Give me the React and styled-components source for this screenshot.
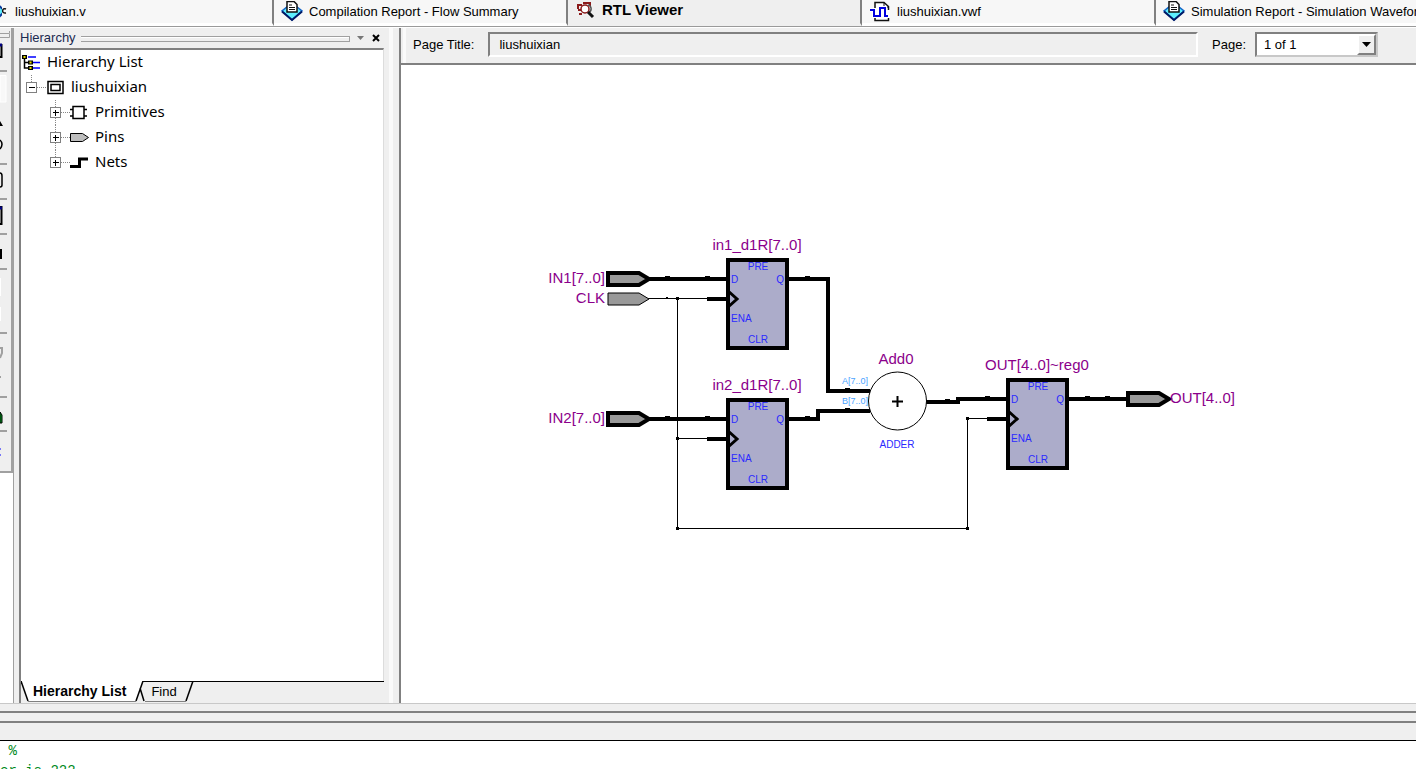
import React from "react";
import styled, { createGlobalStyle } from "styled-components";

const GlobalStyle = createGlobalStyle`
  * {
    box-sizing: border-box;
  }
  body {
    margin: 0;
    background: #efefef;
    color: #000;
    font-family: "Liberation Sans", Arial, sans-serif;
    font-size: 13px;
    overflow: hidden;
  }
  svg {
    display: block;
    flex: none;
  }
`;

const Window = styled.div`
  height: 100vh;
  display: flex;
  flex-direction: column;
  overflow: hidden;
`;

/* document tabs */

const TabBar = styled.nav`
  flex: none;
  display: flex;
  height: 27px;
  overflow: hidden;
  background: #f7f7f7;
  border-bottom: 1px solid #9a9a9a;
`;

const Tab = styled.button`
  flex: none;
  display: flex;
  align-items: center;
  gap: 6px;
  width: 294px;
  padding: ${(p) => (p.$active ? "0 0 4px 8px" : "1px 0 0 7px")};
  border: 0;
  border-right: 2px solid #808080;
  border-bottom: 3px solid ${(p) => (p.$active ? "#efefef" : "#fff")};
  background: ${(p) => (p.$active ? "#efefef" : "#f7f7f7")};
  color: #000;
  font-family: inherit;
  font-size: ${(p) => (p.$active ? 15 : 13)}px;
  font-weight: ${(p) => (p.$active ? 700 : 400)};
  line-height: 20px;
  white-space: nowrap;

  &:first-child {
    margin-left: -20px;
  }
`;

const Main = styled.div`
  flex: 1;
  display: flex;
  min-height: 0;
  border-top: 1px solid #fff;
`;

/* left tool strip, mostly cut by the window edge */

const ToolColumn = styled.aside`
  flex: none;
  width: 14px;
  background: #fff;
  border-right: 1px solid #a0a0a0;
`;

const ToolStrip = styled.div`
  height: 445px;
  overflow: hidden;
  background: #efefef;
  border-right: 2px solid #a0a0a0;
  border-bottom: 2px solid #a0a0a0;
`;

/* hierarchy panel */

const Panel = styled.section`
  flex: none;
  display: flex;
  flex-direction: column;
  width: 370px;
  padding-left: 5px;
`;

const PanelHead = styled.header`
  display: flex;
  align-items: center;
  height: 20px;
  padding: 0 0 1px 1px;
  color: #1a2a50;
`;

const Grip = styled.div`
  flex: 1;
  height: 6px;
  margin: 2px 2px 0 5px;
  border: 1px solid #a0a0a0;
  border-left: 0;
  box-shadow: inset 0 1px #fff;
`;

const HeadButton = styled.button`
  width: 16px;
  height: 16px;
  padding: 0;
  display: flex;
  align-items: center;
  justify-content: center;
  border: 0;
  background: none;
`;

const PanelBody = styled.div`
  flex: 1;
  background: #fff;
  border-top: 2px solid #808080;
  border-left: 2px solid #808080;
  border-right: 1px solid #dcdcdc;
`;

const Tree = styled.ul`
  margin: 0;
  padding: 0;
  list-style: none;
  font-family: "Noto Sans", sans-serif;
  font-size: 15px;
  line-height: 22px;
`;

const TreeRow = styled.li`
  display: flex;
  align-items: center;
  height: 25px;
  padding-left: ${(p) => p.$indent}px;
`;

const TreeLabel = styled.span`
  padding: 0 0 3px ${(p) => p.$gap || 6}px;
`;

const PanelTabs = styled.div`
  display: flex;
  height: 22px;
  border-left: 2px solid #808080;
`;

const PanelTab = styled.button`
  height: 21px;
  padding: 0 4px 0 1px;
  border: 0;
  border-top: 1px solid ${(p) => (p.$active ? "#fff" : "#000")};
  border-bottom: 1px solid #808080;
  background: ${(p) => (p.$active ? "#fff" : "#efefef")};
  color: #000;
  font-family: inherit;
  font-size: ${(p) => (p.$active ? 14 : 13)}px;
  font-weight: ${(p) => (p.$active ? 700 : 400)};
  line-height: 19px;
`;

const PanelTabsRest = styled.div`
  flex: 1;
  border-top: 1px solid #000;
`;

/* viewer */

const Gutter = styled.div`
  flex: none;
  width: 15px;
  padding-left: 5px;

  &::before {
    content: "";
    display: block;
    width: 10px;
    height: 100%;
    border-left: 4px solid #fafafa;
    border-right: 3px solid #fafafa;
  }
`;

const Viewer = styled.section`
  flex: 1;
  min-width: 0;
  display: flex;
  flex-direction: column;
  border-left: 2px solid #808080;
`;

const PageBar = styled.div`
  flex: none;
  display: flex;
  align-items: center;
  height: 35px;
  padding: 0 38px 2px 12px;
`;

const TitleInput = styled.input`
  flex: 1;
  min-width: 0;
  height: 25px;
  margin: 0 14px;
  padding: 0 9px;
  border: 2px solid;
  border-color: #808080 #fff #fff #808080;
  background: #efefef;
  color: #000;
  font-family: inherit;
  font-size: 13px;
`;

const SelectBox = styled.div`
  position: relative;
  width: 123px;
  height: 25px;
  margin-left: 9px;
`;

const PageSelect = styled.select`
  appearance: none;
  width: 100%;
  height: 100%;
  padding: 0 7px;
  border: 2px solid;
  border-color: #808080 #c8c8c8 #c8c8c8 #808080;
  border-radius: 0;
  background: #fff;
  color: #000;
  font-family: inherit;
  font-size: 13px;
`;

const SelectArrow = styled.span`
  position: absolute;
  top: 2px;
  right: 2px;
  bottom: 2px;
  width: 19px;
  display: flex;
  align-items: center;
  justify-content: center;
  border: 2px solid;
  border-color: #fff #808080 #808080 #fff;
  background: #efefef;
  pointer-events: none;
`;

const Canvas = styled.div`
  flex: 1;
  min-height: 0;
  overflow: hidden;
  background: #fff;
  border-top: 2px solid #808080;
`;

/* message log */

const Splitter = styled.div`
  flex: none;
  height: 16px;
  padding-top: 7px;
  border-top: 1px solid #c8c8c8;

  &::after {
    content: "";
    display: block;
    height: 8px;
    border-top: 2px solid #808080;
    border-bottom: 2px solid #808080;
  }
`;

const Log = styled.section`
  flex: none;
  height: 50px;
  padding-top: 21px;
  overflow: hidden;
`;

const LogText = styled.pre`
  height: 40px;
  margin: 0;
  border-top: 1px solid #000;
  background: #fff;
  color: #008a1c;
  font-family: "Liberation Mono", monospace;
  font-size: 14px;
  line-height: 20px;
`;

function ReportIcon() {
  return (
    <svg width="22" height="22" viewBox="0 0 22 22">
      <path d="M11 2L21 10L11 19L1 10Z" fill="#5df0ff" stroke="#1464c8" strokeWidth="1.5" />
      <path d="M1 10.500L11 19L21 10.500" fill="none" stroke="#001a66" strokeWidth="2" />
      <path d="M6 0.500h7l3 3V11H6z" fill="#fff" stroke="#111" strokeWidth="1.5" />
      <path d="M8 4h3M8 6.500h6M8 8.500h6" stroke="#111" />
    </svg>
  );
}

function VerilogIcon() {
  return (
    <svg width="22" height="22" viewBox="0 0 22 22">
      <path d="M9 2L18 10L9 19L0 10Z" fill="#5df0ff" stroke="#0b3a9c" strokeWidth="2" />
      <path d="M15 6h7v9h-7z" fill="#f7f7f7" />
      <path d="M19 8c-4-2-5 5 0 4" fill="none" stroke="#111" strokeWidth="1.5" />
    </svg>
  );
}

function RtlIcon() {
  return (
    <svg width="20" height="18" viewBox="0 0 20 18">
      <path d="M2 8V4h4M2 9h3M6 13H3M7 2h7v3" fill="none" stroke="#8b1a1a" strokeWidth="2" />
      <circle cx="9" cy="8" r="4" fill="#fff" stroke="#8b1a1a" strokeWidth="1.5" />
      <path d="M12 4c4 1 4 6 1 7" fill="none" stroke="#555" strokeWidth="1.5" />
      <path d="M12 11l5 5" stroke="#111" strokeWidth="3" />
    </svg>
  );
}

function WaveIcon() {
  return (
    <svg width="22" height="22" viewBox="0 0 22 22">
      <path d="M6 1.500h9l4.500 4v14H6z" fill="#fff" stroke="#111" strokeWidth="1.5" />
      <path d="M15 2v4h4" fill="none" stroke="#111" />
      <path d="M1 9h4v6h6V7h5v8h3V9" fill="none" stroke="#fff" strokeWidth="4" />
      <path d="M1 9h4v6h6V7h5v8h3" fill="none" stroke="#0000e0" strokeWidth="2" />
    </svg>
  );
}

function ListIcon() {
  return (
    <svg width="19" height="16" viewBox="0 0 19 16">
      <path d="M2.500 2v11H8M3 7.500h5" fill="none" stroke="#000" strokeWidth="1.5" />
      <path d="M6 2h8M11 7.500h7M11 13h7" stroke="#0000ff" strokeWidth="1.5" />
      <path d="M0 0h5v4H0zM6 5.500h5v4H6zM6 11h5v4H6z" fill="#000" />
      <path d="M1.500 1h2v2h-2zM7.500 6.500h2v2h-2zM7.500 12h2v2h-2z" fill="#e8e000" />
    </svg>
  );
}

/* expander box plus the dotted connector on both sides */
function Expander({ open, last }) {
  return (
    <svg width="20" height="25" viewBox="0 0 20 25" shapeRendering="crispEdges">
      <path d={last ? "M5.500 0V8M11 12.500h9" : "M5.500 0V25M11 12.500h9"} stroke="#888" strokeDasharray="1 1" />
      <rect x="0.500" y="7.500" width="10" height="10" fill="#fff" stroke="#808080" />
      <path d={open ? "M3 12.500h6" : "M3 12.500h6M5.500 10v6"} stroke="#000" />
    </svg>
  );
}

function NodeIcon({ kind }) {
  return (
    <svg width="20" height="16" viewBox="0 0 20 16">
      {kind === "entity" && (
        <g fill="#fff" stroke="#000" strokeWidth="1.5">
          <path d="M2 1.500h15v12H2z" />
          <path d="M5 4.500h9v6H5z" />
        </g>
      )}
      {kind === "primitive" && (
        <g fill="#fff" stroke="#000" strokeWidth="1.5">
          <path d="M0 4.500h17M0 11h17" />
          <path d="M3 1.500h11v12H3z" />
        </g>
      )}
      {kind === "pin" && <path d="M0.500 3.500h12l6 4l-6 4h-12z" fill="#bdbdbd" stroke="#000" />}
      {kind === "net" && <path d="M0 11.500h9.500V4H18" fill="none" stroke="#000" strokeWidth="3" />}
    </svg>
  );
}

const tabs = [
  { label: "liushuixian.v", Icon: VerilogIcon },
  { label: "Compilation Report - Flow Summary", Icon: ReportIcon },
  { label: "RTL Viewer", Icon: RtlIcon, active: true },
  { label: "liushuixian.vwf", Icon: WaveIcon },
  { label: "Simulation Report - Simulation Waveforms", Icon: ReportIcon },
];

const nodes = [
  { label: "Primitives", kind: "primitive" },
  { label: "Pins", kind: "pin" },
  { label: "Nets", kind: "net" },
];

function ToolMarks() {
  return (
    <svg width="12" height="444" viewBox="0 28 12 444" fill="none">
      <path d="M0 33.500h9.500V31M0 37.500h9.500V34" stroke="#a0a0a0" />
      <path d="M0 71h7M0 164h7M0 199h7M0 234h7M0 269h7M0 333h7M0 397h7M0 431h7" stroke="#a0a0a0" strokeWidth="2" />
      <path d="M0 75.500h6V102H0z" fill="#f8f8f8" stroke="#fff" />
      <path d="M0 45h1.500v12H0M0 207h1.500v17H0" stroke="#000" strokeWidth="2" />
      <path d="M0 45h2M0 208h2" stroke="#000080" strokeWidth="3" />
      <path d="M0 121l3 5H0z" fill="#000" />
      <path d="M0 140q4 4 0 9M0 173q2 0 2 3v9q0 2-2 2" stroke="#000" strokeWidth="1.5" />
      <path d="M0 250h1v8H0" stroke="#000" strokeWidth="2" />
      <path d="M0 278h1v18H0zM0 307h1v14H0z" fill="#fff" />
      <path d="M0 348h2v5l-2 5M0 377h1" stroke="#a0a0a0" strokeWidth="2" />
      <path d="M0 412l2 3v8H0z" fill="#00a020" stroke="#000" />
      <path d="M0 449h1M0 455h1" stroke="#0000ff" />
    </svg>
  );
}

/* schematic parts */

const NetLabel = styled.text`
  fill: #8b008b;
  font-size: 15px;
  text-anchor: ${(p) => p.$anchor || "start"};
`;

const PortLabel = styled.text`
  fill: ${(p) => (p.$bus ? "#4aa3ff" : "#2a2aff")};
  font-size: ${(p) => (p.$bus ? 9 : 10)}px;
  text-anchor: ${(p) => p.$anchor || "start"};
`;

function Register({ x, y, name }) {
  return (
    <g transform={`translate(${x} ${y})`}>
      <NetLabel x="30" y="-8" $anchor="middle">{name}</NetLabel>
      <rect x="1" y="2" width="59" height="88" fill="#acacca" stroke="#000" strokeWidth="4" />
      <path d="M-20 41H0" stroke="#000" strokeWidth="4" />
      <path d="M0 32L10 41L0 50" fill="none" stroke="#000" strokeWidth="3" />
      <PortLabel x="31" y="12" $anchor="middle">PRE</PortLabel>
      <PortLabel x="4" y="25">D</PortLabel>
      <PortLabel x="57" y="25" $anchor="end">Q</PortLabel>
      <PortLabel x="4" y="64">ENA</PortLabel>
      <PortLabel x="31" y="85" $anchor="middle">CLR</PortLabel>
    </g>
  );
}

function Pin({ x, y, thin }) {
  return (
    <path
      d={`M${x} ${y - 6}h31l10 6l-10 6H${x}z`}
      fill="#999"
      stroke="#000"
      strokeWidth={thin ? 1 : 4}
    />
  );
}

function Schematic() {
  return (
    <svg width="1015" height="638" viewBox="401 65 1015 638" role="img" aria-label="RTL schematic">
      <g fill="none" stroke="#000" strokeWidth="4">
        <path d="M648 279H728M648 419H728" />
        <path d="M788 279H828V391H870" />
        <path d="M788 419H818V411H870" />
        <path d="M926 402H958V399H1008" />
        <path d="M1068 399H1128" />
      </g>
      <g fill="none" stroke="#000" shapeRendering="crispEdges">
        <path d="M648 298.500H708M677.500 298V528.500H967.500V418.500H990M677.500 438.500H708" />
      </g>
      <path
        d="M665 276h5v3h-5zM705 276h5v3h-5zM805 276h5v3h-5zM665 416h5v3h-5zM705 416h5v3h-5zM805 416h5v3h-5zM845 388h5v3h-5zM845 408h5v3h-5zM945 399h5v3h-5zM985 396h5v3h-5zM1085 396h5v3h-5zM1105 396h5v3h-5zM666 297h2v2h-2zM676 297h3v3h-3zM676 437h3v3h-3zM676 527h3v3h-3zM966 527h3v3h-3zM966 417h3v3h-3z"
        fill="#000"
      />
      <Pin x={608} y={279} />
      <Pin x={608} y={299} thin />
      <Pin x={608} y={419} />
      <Pin x={1128} y={399} />
      <NetLabel x="605" y="283" $anchor="end">IN1[7..0]</NetLabel>
      <NetLabel x="605" y="303" $anchor="end">CLK</NetLabel>
      <NetLabel x="605" y="423" $anchor="end">IN2[7..0]</NetLabel>
      <NetLabel x="1170" y="403">OUT[4..0]</NetLabel>
      <Register x={727} y={258} name="in1_d1R[7..0]" />
      <Register x={727} y={398} name="in2_d1R[7..0]" />
      <Register x={1007} y={378} name="OUT[4..0]~reg0" />
      <circle cx="897.500" cy="401" r="29" fill="#fff" stroke="#000" />
      <path d="M892 401.500h11M897.500 396v11" stroke="#000" strokeWidth="2" />
      <NetLabel x="896" y="364" $anchor="middle">Add0</NetLabel>
      <PortLabel x="897" y="448" $anchor="middle">ADDER</PortLabel>
      <PortLabel x="868" y="384" $anchor="end" $bus>A[7..0]</PortLabel>
      <PortLabel x="868" y="404" $anchor="end" $bus>B[7..0]</PortLabel>
    </svg>
  );
}

function App() {
  return (
    <Window>
      <GlobalStyle />
      <TabBar>
        {tabs.map(({ label, Icon, active }) => (
          <Tab key={label} $active={active}>
            <Icon />
            {label}
          </Tab>
        ))}
      </TabBar>
      <Main>
        <ToolColumn>
          <ToolStrip>
            <ToolMarks />
          </ToolStrip>
        </ToolColumn>
        <Panel>
          <PanelHead>
            Hierarchy
            <Grip />
            <HeadButton aria-label="Menu">
              <svg width="7" height="4" viewBox="0 0 7 4">
                <path d="M0 0h7L3.500 4z" fill="#777" />
              </svg>
            </HeadButton>
            <HeadButton aria-label="Close">
              <svg width="8" height="8" viewBox="0 0 8 8">
                <path d="M1 1l6 6M7 1L1 7" stroke="#000" strokeWidth="2" />
              </svg>
            </HeadButton>
          </PanelHead>
          <PanelBody>
            <Tree>
              <TreeRow $indent={1}>
                <ListIcon />
                <TreeLabel>Hierarchy List</TreeLabel>
              </TreeRow>
              <TreeRow $indent={5}>
                <Expander open last />
                <NodeIcon kind="entity" />
                <TreeLabel $gap={5}>liushuixian</TreeLabel>
              </TreeRow>
              {nodes.map((n, i) => (
                <TreeRow key={n.kind} $indent={29}>
                  <Expander last={i === nodes.length - 1} />
                  <NodeIcon kind={n.kind} />
                  <TreeLabel $gap={5}>{n.label}</TreeLabel>
                </TreeRow>
              ))}
            </Tree>
          </PanelBody>
          <PanelTabs>
            <svg width="11" height="22" viewBox="0 0 11 22">
              <path d="M0 0h11v20H7z" fill="#fff" />
              <path d="M7 20.500h4" stroke="#808080" />
              <path d="M0 0L7 20" stroke="#000" strokeWidth="1.5" />
            </svg>
            <PanelTab $active>Hierarchy List</PanelTab>
            <svg width="20" height="22" viewBox="0 0 20 22">
              <path d="M0 0h13L6 20H0z" fill="#fff" />
              <path d="M0 20.500h6M15 20.500h5" stroke="#808080" />
              <path d="M20 .5h-7" stroke="#000" />
              <path d="M13 0L6 20M10 7l4 13" stroke="#000" strokeWidth="1.5" />
            </svg>
            <PanelTab>Find</PanelTab>
            <svg width="16" height="22" viewBox="0 0 16 22">
              <path d="M0 20.500h5" stroke="#808080" />
              <path d="M0 .5h16" stroke="#000" />
              <path d="M12 0L5 20" stroke="#000" strokeWidth="1.5" />
            </svg>
            <PanelTabsRest />
          </PanelTabs>
        </Panel>
        <Gutter />
        <Viewer>
          <PageBar>
            <label htmlFor="page-title">Page Title:</label>
            <TitleInput id="page-title" defaultValue="liushuixian" readOnly />
            <label htmlFor="page-select">Page:</label>
            <SelectBox>
              <PageSelect id="page-select">
                <option>1 of 1</option>
              </PageSelect>
              <SelectArrow>
                <svg width="9" height="5" viewBox="0 0 9 5">
                  <path d="M0 0h9L4.500 5z" fill="#000" />
                </svg>
              </SelectArrow>
            </SelectBox>
          </PageBar>
          <Canvas>
            <Schematic />
          </Canvas>
        </Viewer>
      </Main>
      <Splitter />
      <Log>
        <LogText>{" %\ner is 222"}</LogText>
      </Log>
    </Window>
  );
}

export default App;
